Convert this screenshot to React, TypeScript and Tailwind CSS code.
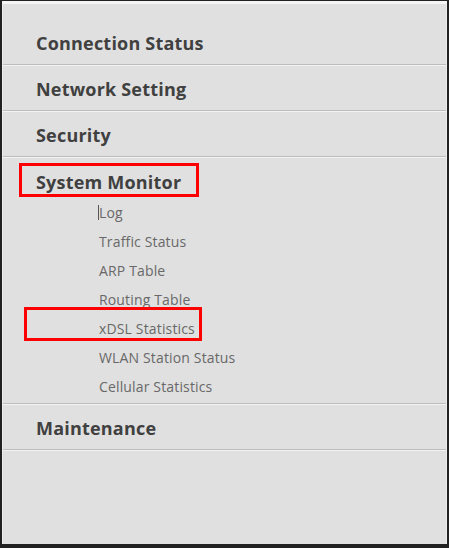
import React from "react";

const font = { fontFamily: "'Open Sans', Lato, sans-serif" };

function Divider() {
  return (
    <div className="flex flex-col">
      <div className="h-px bg-[#bdbdbd]" />
      <div className="h-px bg-[#f3f3f3]" />
    </div>
  );
}

function Header({ label }: { label: string }) {
  return (
    <div className="flex h-[44px] items-center pl-[33px] pt-[2px] text-[18px] font-bold tracking-[0.2px] text-[#404040]">
      {label}
    </div>
  );
}

const monitorItems = [
  "Log",
  "Traffic Status",
  "ARP Table",
  "Routing Table",
  "xDSL Statistics",
  "WLAN Station Status",
  "Cellular Statistics",
];

export default function App() {
  return (
    <div
      className="flex h-[548px] w-[449px] flex-col bg-[#212121] pb-[4px] pl-[2px] pr-[2px] pt-px"
      style={font}
    >
      <div className="flex flex-1 flex-col border-x border-t-[3px] border-x-[#ececec] border-t-[#f5f5f5] bg-[#e0e0e0] pt-[16px]">
        <Header label="Connection Status" />
        <Divider />
        <Header label="Network Setting" />
        <Divider />
        <Header label="Security" />
        <Divider />

        <div className="flex flex-col pb-[2px] pt-[8px]">
          <div className="relative flex h-[32px] items-center pl-[33px] text-[18px] font-bold tracking-[0.2px] text-[#404040]">
            System Monitor
            <div className="absolute left-[16px] top-[-3px] h-[34px] w-[180px] border-[3px] border-[#ff0000]" />
          </div>
          {monitorItems.map((item) => (
            <div
              key={item}
              className="relative flex h-[29px] items-center pl-[96px] text-[14px] tracking-[0.15px] text-[#686868]"
            >
              {item === "Log" && (
                <span className="absolute left-[95px] top-[7px] h-[15px] w-px bg-[#555555]" />
              )}
              {item}
              {item === "xDSL Statistics" && (
                <div className="absolute left-[21px] top-[-7px] h-[34px] w-[178px] border-[3px] border-[#ff0000]" />
              )}
            </div>
          ))}
        </div>
        <Divider />
        <Header label="Maintenance" />
        <Divider />
      </div>
    </div>
  );
}
